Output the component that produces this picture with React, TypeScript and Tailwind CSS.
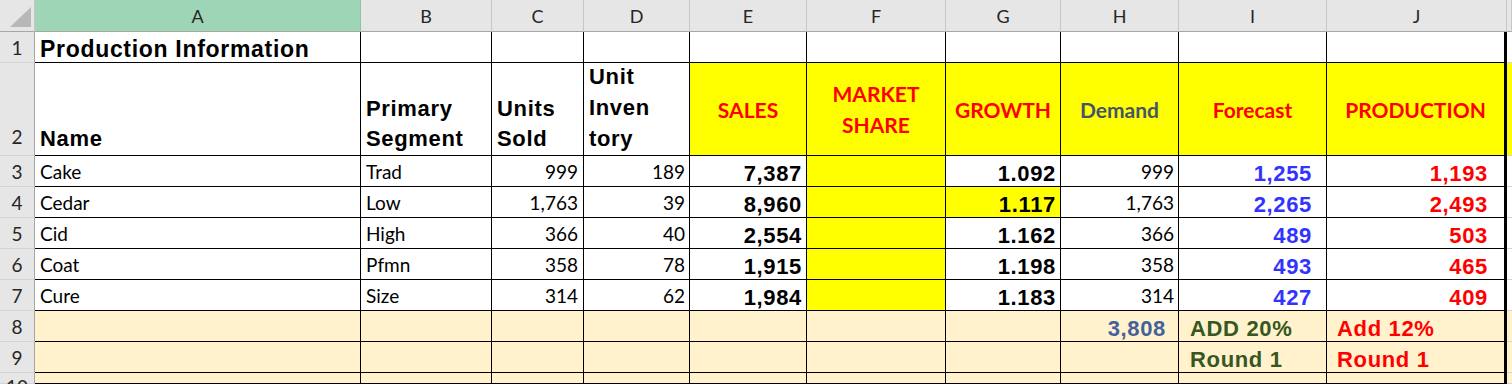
import type { ReactNode } from "react";

const arial = "font-['Liberation_Sans',Arial,sans-serif]";
const calibri = "font-['Lato',sans-serif]";

const letters = ["A", "B", "C", "D", "E", "F", "G", "H", "I", "J", ""];

const rows = [
  ["Cake", "Trad", "999", "189", "7,387", "1.092", "999", "1,255", "1,193"],
  ["Cedar", "Low", "1,763", "39", "8,960", "1.117", "1,763", "2,265", "2,493"],
  ["Cid", "High", "366", "40", "2,554", "1.162", "366", "489", "503"],
  ["Coat", "Pfmn", "358", "78", "1,915", "1.198", "358", "493", "465"],
  ["Cure", "Size", "314", "62", "1,984", "1.183", "314", "427", "409"],
];

function Cell({
  children,
  className = "",
  thick,
}: {
  children?: ReactNode;
  className?: string;
  thick?: boolean;
}) {
  return (
    <div
      className={`flex overflow-hidden whitespace-nowrap border-b border-black ${
        thick ? "border-r-[3px]" : "border-r"
      } ${className}`}
    >
      {children}
    </div>
  );
}

function RowNum({ n, className = "" }: { n: number | string; className?: string }) {
  return (
    <div
      className={`flex items-end justify-center border-r border-b border-r-[#a6a6a6] border-b-[#d4d4d4] bg-[#e6e6e6] pb-[2px] text-[19px] leading-6 text-[#262626] ${calibri} ${className}`}
    >
      {n}
    </div>
  );
}

function Filler({ className = "" }: { className?: string }) {
  return <div className={`border-b border-[#d4d4d4] ${className}`} />;
}

const body = `${calibri} text-[19px] leading-6 text-black items-end pb-[2px]`;
const bold = `${arial} font-bold text-[22px] leading-[25px] tracking-[0.03em] items-end`;
const head = `${calibri} font-bold text-[21px] leading-[31px] items-center justify-center text-center`;

export default function App() {
  return (
    <div className="h-[384px] w-[1512px] overflow-hidden bg-white">
      <div className="grid grid-cols-[35px_326px_131px_92px_106px_117px_139px_115px_118px_148px_180px_1fr] grid-rows-[32px_31px_93px_31px_31px_31px_31px_31px_31px_31px_11px]">
        {/* column headers */}
        <div className="relative border-r border-b border-r-[#c6c6c6] border-b-[#a6a6a6] bg-[#e6e6e6]">
          <svg className="absolute inset-0" width="35" height="32" viewBox="0 0 35 32">
            <polygon points="10,27 31,27 31,7" fill="#b8b8b8" />
          </svg>
        </div>
        {letters.map((l, i) => (
          <div
            key={i}
            className={`flex items-center justify-center border-b border-b-[#a6a6a6] pt-px text-[18px] text-[#262626] ${calibri} ${
              i === 0 ? "bg-[#9fd5b7] border-r border-r-[#8fc4a6]" : "bg-[#e6e6e6] border-r border-r-[#c6c6c6]"
            }`}
          >
            {l}
          </div>
        ))}

        {/* row 1 */}
        <RowNum n={1} />
        <Cell className={`${bold} text-[23px] tracking-[0.02em] px-[5px]`}>Production Information</Cell>
        <Cell />
        <Cell />
        <Cell />
        <Cell />
        <Cell />
        <Cell />
        <Cell />
        <Cell />
        <Cell thick />
        <Filler />

        {/* row 2 */}
        <RowNum n={2} className="pb-[6px]" />
        <Cell className={`${bold} px-[5px] leading-[30px] pb-[1px]`}>Name</Cell>
        <Cell className={`${bold} px-[5px] leading-[30px] pb-[1px]`}>
          <div>
            Primary
            <br />
            Segment
          </div>
        </Cell>
        <Cell className={`${bold} px-[5px] leading-[30px] pb-[1px]`}>
          <div>
            Units
            <br />
            Sold
          </div>
        </Cell>
        <Cell className={`${bold} px-[5px] leading-[31px] pb-[1px]`}>
          <div>
            Unit
            <br />
            Inven
            <br />
            tory
          </div>
        </Cell>
        <Cell className={`${head} bg-[#ffff00] text-[#ff0000]`}>SALES</Cell>
        <Cell className={`${head} bg-[#ffff00] text-[#ff0000]`}>
          <div>
            MARKET
            <br />
            SHARE
          </div>
        </Cell>
        <Cell className={`${head} bg-[#ffff00] text-[#ff0000]`}>GROWTH</Cell>
        <Cell className={`${head} bg-[#ffff00] text-[#44546a]`}>Demand</Cell>
        <Cell className={`${head} bg-[#ffff00] text-[#ff0000]`}>Forecast</Cell>
        <Cell thick className={`${head} bg-[#ffff00] text-[#ff0000]`}>
          PRODUCTION
        </Cell>
        <Filler className="bg-[#ffff00]" />

        {/* rows 3-7 */}
        {rows.map((r, i) => (
          <RowGroup key={r[0]} n={i + 3} r={r} growthHighlight={i === 1} />
        ))}

        {/* row 8 */}
        <RowNum n={8} />
        {Array.from({ length: 7 }).map((_, i) => (
          <Cell key={i} className="bg-[#fff2cc]" />
        ))}
        <Cell className={`${bold} bg-[#fff2cc] justify-end pr-[12px] text-[#44619d]`}>3,808</Cell>
        <Cell className={`${bold} bg-[#fff2cc] pl-[11px] text-[#375623]`}>ADD 20%</Cell>
        <Cell thick className={`${bold} bg-[#fff2cc] pl-[10px] text-[#ff0000]`}>
          Add 12%
        </Cell>
        <Filler className="bg-[#fff2cc]" />

        {/* row 9 */}
        <RowNum n={9} />
        {Array.from({ length: 8 }).map((_, i) => (
          <Cell key={i} className="bg-[#fff2cc]" />
        ))}
        <Cell className={`${bold} bg-[#fff2cc] pl-[11px] text-[#375623]`}>Round 1</Cell>
        <Cell thick className={`${bold} bg-[#fff2cc] pl-[10px] text-[#ff0000]`}>
          Round 1
        </Cell>
        <Filler className="bg-[#fff2cc]" />

        {/* row 10 */}
        <RowNum n={10} className="items-start pt-[2px]" />
        {Array.from({ length: 9 }).map((_, i) => (
          <Cell key={i} className="bg-[#fff2cc]" />
        ))}
        <Cell thick className="bg-[#fff2cc]" />
        <Filler className="bg-[#fff2cc]" />
      </div>
    </div>
  );
}

function RowGroup({
  n,
  r,
  growthHighlight,
}: {
  n: number;
  r: string[];
  growthHighlight: boolean;
}) {
  return (
    <>
      <RowNum n={n} />
      <Cell className={`${body} px-[5px]`}>{r[0]}</Cell>
      <Cell className={`${body} px-[5px]`}>{r[1]}</Cell>
      <Cell className={`${body} justify-end pr-[5px]`}>{r[2]}</Cell>
      <Cell className={`${body} justify-end pr-[4px]`}>{r[3]}</Cell>
      <Cell className={`${bold} justify-end pr-[4px] text-black`}>{r[4]}</Cell>
      <Cell className="bg-[#ffff00]" />
      <Cell
        className={`${bold} justify-end pr-[4px] text-black ${
          growthHighlight ? "bg-[#ffff00]" : ""
        }`}
      >
        {r[5]}
      </Cell>
      <Cell className={`${body} justify-end pr-[4px]`}>{r[6]}</Cell>
      <Cell className={`${bold} justify-end pr-[14px] text-[#3333ff]`}>{r[7]}</Cell>
      <Cell thick className={`${bold} justify-end pr-[16px] text-[#ff0000]`}>
        {r[8]}
      </Cell>
      <Filler />
    </>
  );
}
